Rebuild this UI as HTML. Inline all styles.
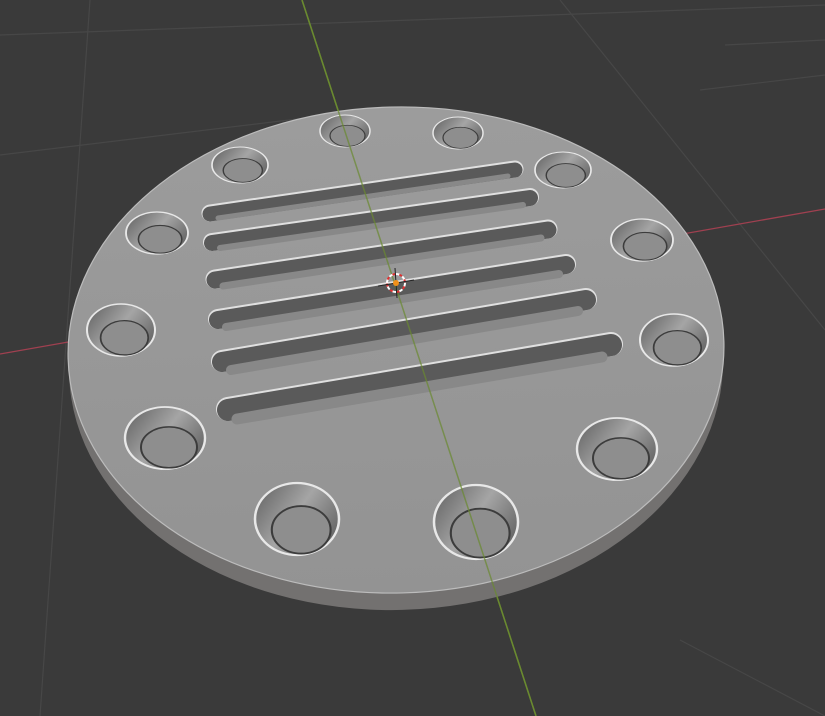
<!DOCTYPE html>
<html><head><style>html,body{margin:0;padding:0;background:#3a3a3a;overflow:hidden}svg{display:block}</style></head>
<body>
<svg width="825" height="716" viewBox="0 0 825 716" xmlns="http://www.w3.org/2000/svg">
<defs>
<linearGradient id="top" x1="0" y1="0" x2="0" y2="1">
<stop offset="0" stop-color="#9c9c9c"/><stop offset="1" stop-color="#939393"/></linearGradient>
<linearGradient id="hole" x1="0" y1="0" x2="1" y2="0.6">
<stop offset="0" stop-color="#5e5e5e"/><stop offset="0.55" stop-color="#a5a5a5"/><stop offset="1" stop-color="#6a6a6a"/></linearGradient>
<g id="h">
<ellipse cx="0" cy="0" rx="1" ry="1" fill="url(#hole)" stroke="#e8e8e8" stroke-width="0.06"/>
<ellipse cx="0.1" cy="0.3" rx="0.7" ry="0.66" fill="#8e8e8e" stroke="#3c3c3c" stroke-width="0.05"/>
</g>
</defs>
<rect width="825" height="716" fill="#3a3a3a"/>
<g stroke="#474747" stroke-width="1.2" fill="none">
<line x1="0" y1="35" x2="825" y2="5"/>
<line x1="0" y1="155" x2="330" y2="115"/>
<line x1="700" y1="90" x2="825" y2="75"/>
<line x1="90" y1="0" x2="40" y2="716"/>
<line x1="560" y1="0" x2="825" y2="330"/>
<line x1="680" y1="640" x2="825" y2="716"/>
<line x1="725" y1="45" x2="825" y2="40"/>
</g>
<line x1="0" y1="354" x2="825" y2="209" stroke="#a04050" stroke-width="1.3"/>
<line x1="302" y1="0" x2="536" y2="716" stroke="#6a8a30" stroke-width="1.5"/>
<ellipse cx="396" cy="366" rx="327" ry="244" fill="#737170" transform="rotate(-1.5 396 366)"/>
<ellipse cx="396" cy="350" rx="328" ry="243" fill="url(#top)" stroke="#bcbcbc" stroke-width="1.2" transform="rotate(-1.5 396 350)"/>
<use href="#h" transform="translate(345,131) scale(25,16)"/>
<use href="#h" transform="translate(458,133) scale(25,16)"/>
<use href="#h" transform="translate(240,165) scale(28,18)"/>
<use href="#h" transform="translate(563,170) scale(28,18)"/>
<use href="#h" transform="translate(157,233) scale(31,21)"/>
<use href="#h" transform="translate(642,240) scale(31,21)"/>
<use href="#h" transform="translate(121,330) scale(34,26)"/>
<use href="#h" transform="translate(674,340) scale(34,26)"/>
<use href="#h" transform="translate(165,438) scale(40,31)"/>
<use href="#h" transform="translate(617,449) scale(40,31)"/>
<use href="#h" transform="translate(297,519) scale(42,36)"/>
<use href="#h" transform="translate(476,522) scale(42,37)"/>
<g stroke-linecap="round" fill="none">
<g stroke="#e0e0e0">
<line x1="210" y1="213" x2="515" y2="169" stroke-width="17"/>
<line x1="212" y1="242" x2="530" y2="197" stroke-width="18"/>
<line x1="215" y1="279" x2="548" y2="229" stroke-width="19"/>
<line x1="218" y1="319" x2="566" y2="264" stroke-width="20"/>
<line x1="222" y1="361" x2="586" y2="299" stroke-width="22"/>
<line x1="228" y1="409" x2="611" y2="344" stroke-width="24"/>
</g>
<g stroke="#5a5a5a">
<line x1="210" y1="214" x2="515" y2="170" stroke-width="15"/>
<line x1="212" y1="243" x2="530" y2="198" stroke-width="16"/>
<line x1="215" y1="280" x2="548" y2="230" stroke-width="17"/>
<line x1="218" y1="320" x2="566" y2="265" stroke-width="18"/>
<line x1="222" y1="362" x2="586" y2="300" stroke-width="20"/>
<line x1="228" y1="410" x2="611" y2="345" stroke-width="22"/>
</g>
<g stroke="#888888">
<line x1="218" y1="218" x2="508" y2="176" stroke-width="5"/>
<line x1="220" y1="248" x2="523" y2="205" stroke-width="6"/>
<line x1="223" y1="286" x2="541" y2="238" stroke-width="7"/>
<line x1="226" y1="327" x2="559" y2="274" stroke-width="8"/>
<line x1="231" y1="370" x2="578" y2="311" stroke-width="10"/>
<line x1="237" y1="419" x2="602" y2="357" stroke-width="11"/>
</g>
</g>
<line x1="302" y1="0" x2="536" y2="716" stroke="#6a8a30" stroke-width="1.5" opacity="0.7"/>
<circle cx="396" cy="283" r="9" fill="none" stroke="#fff" stroke-width="2" stroke-dasharray="4 3"/>
<circle cx="396" cy="283" r="9" fill="none" stroke="#e03030" stroke-width="2" stroke-dasharray="3 4" stroke-dashoffset="3.5"/>
<line x1="378" y1="286" x2="414" y2="280" stroke="#222" stroke-width="1"/>
<line x1="395" y1="268" x2="397" y2="298" stroke="#222" stroke-width="1"/>
<circle cx="396" cy="283" r="3" fill="#f0901a"/>
</svg>
</body></html>
